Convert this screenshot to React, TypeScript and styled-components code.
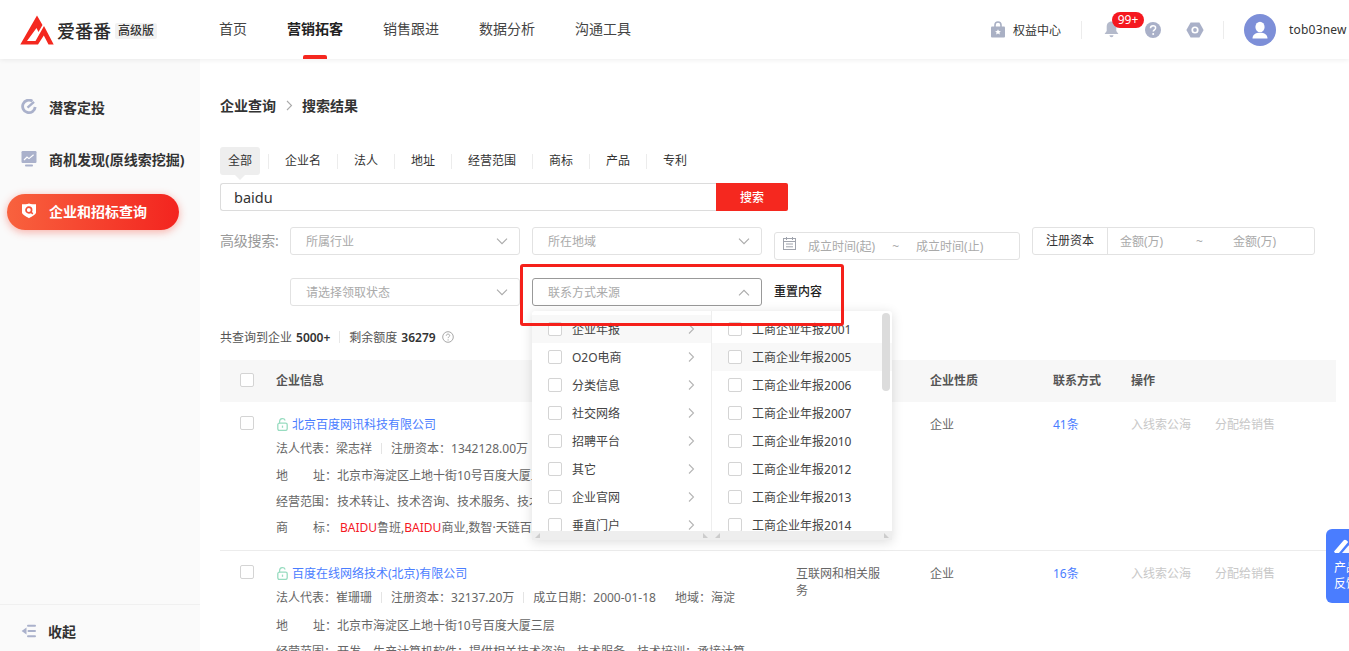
import React from 'react';
import styled, { createGlobalStyle } from 'styled-components';

const FONT = `"Noto Sans", "Noto Sans CJK SC", sans-serif`;

const Global = createGlobalStyle`
  html, body { margin: 0; padding: 0; height: 100%; overflow: hidden; background: #fff; }
  body { font-family: ${FONT}; font-size: 12px; color: #333; }
  * { box-sizing: border-box; }
`;

const Page = styled.div`
  position: relative;
  width: 1349px;
  height: 651px;
  overflow: hidden;
  display: flex;
  flex-direction: column;
`;

const Header = styled.header`
  position: relative;
  z-index: 5;
  flex: none;
  height: 59px;
  background: #fff;
  box-shadow: 0 1px 5px rgba(0, 0, 0, 0.07);
  display: flex;
  align-items: center;
  padding-left: 20px;
`;

const Brand = styled.div`
  width: 199px;
  display: flex;
  align-items: center;
`;

const BrandName = styled.span`
  margin-left: 3px;
  font-size: 18px;
  font-weight: 500;
  color: #2b2b2b;
  line-height: 24px;
  margin-top: 2px;
`;

const BrandTag = styled.span`
  margin-left: 4px;
  margin-top: 2px;
  width: 42px;
  height: 16px;
  line-height: 16px;
  text-align: center;
  background: #f2f2f2;
  border-radius: 2px;
  font-size: 12px;
  font-weight: 500;
  color: #333;
`;

const Nav = styled.nav`
  display: flex;
  gap: 40px;
  height: 59px;
`;

const NavItem = styled.a<{ $active?: boolean }>`
  position: relative;
  font-size: 14px;
  line-height: 57px;
  color: ${(p) => (p.$active ? '#222' : '#444')};
  font-weight: ${(p) => (p.$active ? 700 : 400)};
  &::after {
    content: '';
    display: ${(p) => (p.$active ? 'block' : 'none')};
    position: absolute;
    left: 16px;
    bottom: 0;
    width: 24px;
    height: 4px;
    border-radius: 2px 2px 0 0;
    background: #f5281f;
  }
`;

const HeaderRight = styled.div`
  margin-left: auto;
  display: flex;
  align-items: center;
  height: 59px;
`;

const Perk = styled.div`
  width: 70px;
  display: flex;
  align-items: center;
  gap: 8px;
  font-size: 12px;
  color: #333;
`;

const VDivider = styled.i<{ $l: number; $r: number }>`
  display: block;
  width: 1px;
  height: 18px;
  background: #ececec;
  margin: 0 ${(p) => p.$r}px 0 ${(p) => p.$l}px;
`;

const IconSlot = styled.span<{ $w: number }>`
  position: relative;
  width: ${(p) => p.$w}px;
  display: flex;
  align-items: center;
`;

const Badge = styled.span`
  position: absolute;
  left: 8px;
  top: -9px;
  width: 32px;
  height: 16px;
  line-height: 16px;
  border-radius: 8px;
  background: #f5181f;
  color: #fff;
  font-size: 12px;
  text-align: center;
`;

const Avatar = styled.span`
  width: 32px;
  height: 32px;
  border-radius: 50%;
  background: #7d8fd8;
  display: flex;
  align-items: center;
  justify-content: center;
`;

const UserName = styled.span`
  margin-left: 13px;
  width: 60px;
  white-space: nowrap;
  font-size: 12px;
  letter-spacing: 0.2px;
  color: #333;
`;

const Body = styled.div`
  flex: 1;
  min-height: 0;
  display: flex;
`;

const Sidebar = styled.aside`
  flex: none;
  width: 200px;
  background: #fafafa;
  display: flex;
  flex-direction: column;
  padding: 31px 0 0 7px;
`;

const SideItem = styled.div<{ $active?: boolean }>`
  width: 172px;
  height: 36px;
  margin-bottom: 16px;
  padding: 0 0 2px 14px;
  border-radius: 18px;
  display: flex;
  align-items: center;
  gap: 12px;
  font-size: 14px;
  font-weight: 700;
  white-space: nowrap;
  color: ${(p) => (p.$active ? '#fff' : '#333')};
  background: ${(p) => (p.$active ? 'linear-gradient(90deg, #f8623e, #f3241f)' : 'transparent')};
  box-shadow: ${(p) => (p.$active ? '0 2px 8px rgba(245, 60, 40, 0.4)' : 'none')};
  svg {
    flex: none;
  }
`;

const SideFoot = styled.div`
  margin: auto 0 0 -7px;
  height: 47px;
  border-top: 1px solid #f0f0f0;
  padding: 6px 0 0 21px;
  display: flex;
  align-items: center;
  gap: 11px;
  font-size: 14px;
  font-weight: 700;
  color: #333;
`;

const Main = styled.main`
  flex: 1;
  min-width: 0;
  padding: 37px 13px 0 20px;
`;

const Crumbs = styled.div`
  height: 18px;
  display: flex;
  align-items: center;
  gap: 9.5px;
  font-size: 14px;
  font-weight: 700;
  color: #333;
`;

const Tabs = styled.div`
  margin-top: 33px;
  display: flex;
  gap: 17px;
  height: 28px;
`;

const Tab = styled.span<{ $active?: boolean; $first?: boolean }>`
  position: relative;
  padding: 0 8px;
  line-height: 28px;
  font-size: 12px;
  color: #333;
  border-radius: 3px;
  background: ${(p) => (p.$active ? '#eeeeee' : 'transparent')};
  &::before {
    content: '';
    display: ${(p) => (p.$first ? 'none' : 'block')};
    position: absolute;
    left: -9px;
    top: 7px;
    width: 1px;
    height: 15px;
    background: #ececec;
  }
  &::after {
    content: '';
    display: ${(p) => (p.$active ? 'block' : 'none')};
    position: absolute;
    left: 15px;
    bottom: -5px;
    border-left: 5px solid transparent;
    border-right: 5px solid transparent;
    border-top: 5px solid #eeeeee;
  }
`;

const SearchRow = styled.div`
  margin-top: 8px;
  display: flex;
  height: 28px;
`;

const SearchInput = styled.div`
  width: 496px;
  border: 1px solid #dcdcdc;
  border-right: none;
  border-radius: 3px 0 0 3px;
  padding-left: 13px;
  font-size: 14.5px;
  line-height: 26px;
  color: #333;
`;

const SearchButton = styled.button`
  width: 72px;
  border: none;
  background: #f5281f;
  color: #fff;
  font-family: ${FONT};
  font-size: 12px;
  font-weight: 500;
  border-radius: 0 2px 2px 0;
  padding: 0;
`;

const FilterRow = styled.div<{ $mt: number }>`
  margin-top: ${(p) => p.$mt}px;
  display: flex;
  align-items: flex-start;
  gap: 12px;
`;

const FilterLabel = styled.span`
  width: 58px;
  line-height: 28px;
  font-size: 14px;
  letter-spacing: -0.25px;
  color: #999;
  white-space: nowrap;
`;

const Select = styled.div<{ $open?: boolean }>`
  width: 230px;
  height: 28px;
  border: 1px solid ${(p) => (p.$open ? '#999' : '#e2e2e2')};
  border-radius: 3px;
  padding: 0 11px 0 15px;
  display: flex;
  align-items: center;
  justify-content: space-between;
  font-size: 12px;
  color: #aaa;
  background: #fff;
`;

const DateRange = styled.div`
  margin-top: 5px;
  width: 246px;
  height: 28px;
  border: 1px solid #e2e2e2;
  border-radius: 3px;
  padding-left: 8px;
  display: flex;
  align-items: center;
  font-size: 12px;
  color: #aaa;
`;

const CalendarSlot = styled.span`
  display: flex;
  margin-bottom: 6px;
`;

const DateText = styled.span<{ $ml: number }>`
  margin-left: ${(p) => p.$ml}px;
  white-space: nowrap;
`;

const DateSep = styled.span`
  margin-left: 17px;
`;

const Capital = styled.div`
  width: 283px;
  height: 28px;
  border: 1px solid #e2e2e2;
  border-radius: 3px;
  display: flex;
  align-items: center;
  font-size: 12px;
  color: #aaa;
`;

const CapitalLabel = styled.span`
  width: 75px;
  height: 26px;
  line-height: 26px;
  text-align: center;
  color: #333;
  border-right: 1px solid #e2e2e2;
`;

const CapitalText = styled.span<{ $w: number; $pl: number }>`
  width: ${(p) => p.$w}px;
  padding-left: ${(p) => p.$pl}px;
`;

const RowSpacer = styled.span`
  width: 58px;
`;

const ResetLink = styled.span`
  line-height: 28px;
  font-size: 12px;
  font-weight: 500;
  color: #222;
`;

const Stats = styled.div`
  margin-top: 22px;
  height: 18px;
  display: flex;
  align-items: center;
  font-size: 12px;
  color: #555;
`;

const StatValue = styled.b`
  margin-left: 4px;
  font-weight: 600;
  color: #333;
`;

const StatDivider = styled.i`
  width: 1px;
  height: 12px;
  margin: 0 9px;
  background: #e8e8e8;
`;

const Table = styled.div`
  margin-top: 14px;
  width: 1116px;
`;

const columns = '56px 520px 134px 123px 78px 205px';

const TableHead = styled.div`
  display: grid;
  grid-template-columns: ${columns};
  height: 42px;
  padding-bottom: 2px;
  align-items: center;
  background: #f7f7f7;
  font-size: 12px;
  font-weight: 600;
  color: #555;
`;

const Check = styled.span<{ $ml?: number }>`
  display: block;
  flex: none;
  width: 14px;
  height: 14px;
  margin-left: ${(p) => p.$ml ?? 0}px;
  border: 1px solid #d4d4d4;
  border-radius: 2px;
  background: #fff;
`;

const TableRow = styled.div`
  display: grid;
  grid-template-columns: ${columns};
  height: 149px;
  padding-top: 14px;
  border-bottom: 1px solid #ececec;
  font-size: 12px;
  color: #666;
  line-height: 17px;
`;

const Info = styled.div`
  min-width: 0;
  margin-top: -1px;
  overflow: hidden;
`;

const CompanyName = styled.div`
  display: flex;
  align-items: center;
  gap: 4px;
  height: 18px;
  color: #4a7dff;
`;

const LockMark = styled.span`
  margin-left: 1px;
  display: flex;
`;

const InfoLine = styled.div<{ $mt: number }>`
  display: flex;
  align-items: center;
  height: 18px;
  margin-top: ${(p) => p.$mt}px;
  white-space: nowrap;
`;

const Label = styled.span`
  flex: none;
  width: 61px;
  display: flex;
  justify-content: space-between;
`;

const Sep = styled.i`
  flex: none;
  width: 1px;
  height: 11px;
  background: #e4e4e4;
  margin: 0 9px;
`;

const Value = styled.span<{ $pl?: number }>`
  padding-left: ${(p) => p.$pl ?? 0}px;
`;

const Hit = styled.span`
  color: #f5181f;
`;

const Region = styled.span`
  margin-left: 19px;
`;

const Cell = styled.div`
  padding-right: 40px;
`;

const Count = styled.div`
  color: #4a7dff;
`;

const Actions = styled.div`
  display: flex;
  gap: 24px;
  color: #c8c8c8;
`;

const Dropdown = styled.div`
  position: absolute;
  left: 532px;
  top: 311px;
  z-index: 6;
  width: 360px;
  height: 229px;
  background: #fff;
  box-shadow: 0 2px 12px rgba(0, 0, 0, 0.14);
  display: flex;
  border-radius: 3px;
`;

const DropColumn = styled.div<{ $w: number; $border?: boolean }>`
  position: relative;
  width: ${(p) => p.$w}px;
  border-right: ${(p) => (p.$border ? '1px solid #eeeeee' : 'none')};
  display: flex;
  flex-direction: column;
`;

const DropList = styled.div`
  height: 220px;
  padding-top: 4px;
  overflow: hidden;
`;

const DropRow = styled.div<{ $hover?: boolean }>`
  height: 28px;
  padding: 0 16px;
  display: flex;
  align-items: center;
  gap: 10px;
  font-size: 12px;
  color: #444;
  white-space: nowrap;
  background: ${(p) => (p.$hover ? '#f8f8f8' : 'transparent')};
`;

const Chevron = styled.span`
  margin-left: auto;
  display: flex;
`;

const HBar = styled.div`
  height: 9px;
  background: #eeeeee;
  display: flex;
  justify-content: space-between;
  align-items: center;
  padding: 0 3px;
`;

const Corner = styled.i<{ $flip?: boolean }>`
  width: 0;
  height: 0;
  border-style: solid;
  border-width: 5px 0 0 5px;
  border-color: transparent transparent transparent #cccccc;
  transform: ${(p) => (p.$flip ? 'none' : 'scaleX(-1)')};
`;

const VThumb = styled.div`
  position: absolute;
  left: 170px;
  top: 2px;
  width: 8px;
  height: 78px;
  border-radius: 4px;
  background: #dcdcdc;
`;

const Highlight = styled.div`
  position: absolute;
  left: 520px;
  top: 264px;
  z-index: 7;
  width: 324px;
  height: 62px;
  border: 3px solid #f5201a;
  border-radius: 3px;
  pointer-events: none;
`;

const Feedback = styled.div`
  position: absolute;
  left: 1326px;
  top: 529px;
  z-index: 7;
  width: 44px;
  height: 74px;
  border-radius: 6px 0 0 6px;
  background: #4a7dff;
  color: #fff;
  font-size: 12px;
  line-height: 16px;
  padding: 9px 0 0 8px;
`;

const FeedbackText = styled.div`
  margin-top: 2px;
  width: 26px;
`;

const ArrowDown = ({ up }: { up?: boolean }) => (
  <svg width="12" height="7" viewBox="0 0 12 7" fill="none">
    <path d={up ? 'M1 6.3l5-5 5 5' : 'M1 .7l5 5 5-5'} stroke="#aaa" strokeWidth="1.1" />
  </svg>
);

const ChevronRight = ({ color = '#b5b5b5', h = 10 }: { color?: string; h?: number }) => (
  <svg width="7" height={h} viewBox="0 0 7 10" fill="none">
    <path d="M1 0.5l4.5 4.5L1 9.5" stroke={color} strokeWidth="1.1" />
  </svg>
);

const Logo = () => (
  <svg width="34" height="30" viewBox="0 0 34 30">
    <path
      d="M0.3 29.5 L17 0.5 L22.5 10 L18.5 17 L16.5 13 L7 26 L15.5 26 L24 11 L33.7 29.5 L28.5 29.5 L23.8 20.5 L18 29.5 Z"
      fill="#f4281f"
    />
  </svg>
);

const LockIcon = () => (
  <svg width="14" height="17" viewBox="0 0 14 17">
    <path d="M4 6V4a3 3 0 0 1 6 0v2" fill="none" stroke="#a9b0c4" strokeWidth="1.6" />
    <rect x="0" y="5.5" width="14" height="11" rx="1" fill="#a9b0c4" />
    <path d="M7 8.2l.9 1.8 2 .2-1.5 1.3.5 2-1.9-1-1.9 1 .5-2-1.5-1.3 2-.2z" fill="#fff" />
  </svg>
);

const BellIcon = () => (
  <svg width="15" height="17" viewBox="0 0 15 17">
    <path d="M7.5 0.5c-3.2 0-4.8 2.4-4.8 5.2v4.2L0.6 13h13.8l-2.1-3.1V5.7c0-2.8-1.6-5.2-4.8-5.2z" fill="#b4bacb" />
    <path d="M5.5 14.2h4c0 1.2-.9 2-2 2s-2-.8-2-2z" fill="#b4bacb" />
  </svg>
);

const HelpIcon = () => (
  <svg width="16" height="16" viewBox="0 0 16 16">
    <circle cx="8" cy="8" r="8" fill="#a9b0c8" />
    <path d="M5.5 6.2c0-1.5 1.1-2.4 2.6-2.4s2.5.9 2.5 2.1c0 1.9-2.4 1.9-2.4 3.7" fill="none" stroke="#fff" strokeWidth="1.5" />
    <circle cx="8.2" cy="12" r="1" fill="#fff" />
  </svg>
);

const GearIcon = () => (
  <svg width="18" height="16" viewBox="0 0 18 16">
    <path d="M4.6 0.5h8.8L17.6 8l-4.2 7.5H4.6L0.4 8z" fill="#a9b0c8" />
    <circle cx="9" cy="8" r="3.6" fill="#fff" />
    <circle cx="9" cy="8" r="1.9" fill="#a9b0c8" />
  </svg>
);

const UserIcon = () => (
  <svg width="18" height="18" viewBox="0 0 18 18">
    <ellipse cx="9" cy="6" rx="4.6" ry="5.2" fill="#fff" />
    <path d="M1.5 17.5c0-3.8 3-5.8 7.5-5.8s7.5 2 7.5 5.8z" fill="#fff" />
  </svg>
);

const TargetIcon = () => (
  <svg width="16" height="16" viewBox="0 0 16 16" fill="none">
    <path d="M11.4 2.1A6.3 6.3 0 1 0 14.2 8" stroke="#aab1cb" strokeWidth="2.8" />
    <path d="M6.5 8.6L13 2.8" stroke="#aab1cb" strokeWidth="2.4" />
  </svg>
);

const MonitorIcon = () => (
  <svg width="16" height="16" viewBox="0 0 16 16">
    <rect x="0.5" y="0" width="15" height="12" rx="1.2" fill="#aab1cb" />
    <path d="M3 9l3-3 2 1.6L12.6 3.8" fill="none" stroke="#fff" strokeWidth="1.2" />
    <rect x="4" y="13.6" width="8" height="1.8" rx="0.9" fill="#aab1cb" />
  </svg>
);

const ShieldIcon = () => (
  <svg width="16" height="16" viewBox="0 0 16 16">
    <path d="M1 1.2C3 1.2 6 1 8 .4c2 .6 5 .8 7 .8v8.6c0 1.4-4.4 4-7 5.4-2.6-1.4-7-4-7-5.4z" fill="#fff" />
    <circle cx="7.8" cy="7" r="2.8" fill="none" stroke="#f5513a" strokeWidth="1.7" />
    <path d="M9.8 9l2 1.8" stroke="#f5513a" strokeWidth="1.6" />
  </svg>
);

const CollapseIcon = () => (
  <svg width="16" height="14" viewBox="0 0 16 14">
    <path d="M5.5 3.6v6.8L0.6 7z" fill="#aab1cb" />
    <rect x="6" y="0.8" width="9" height="2" rx="1" fill="#aab1cb" />
    <rect x="6.5" y="6" width="8.5" height="2" rx="1" fill="#aab1cb" />
    <rect x="6" y="11.2" width="9" height="2" rx="1" fill="#aab1cb" />
  </svg>
);

const CalendarIcon = () => (
  <svg width="13" height="13" viewBox="0 0 13 13" fill="none" stroke="#a0a4ad">
    <rect x="0.5" y="1.5" width="12" height="11" />
    <path d="M0.5 4.5h12M3.5 0v3M9.5 0v3M3 7h7M3 9.8h7" />
  </svg>
);

const QuestionIcon = () => (
  <svg width="12" height="12" viewBox="0 0 12 12" fill="none" style={{ marginLeft: 6 }}>
    <circle cx="6" cy="6" r="5.3" stroke="#a8a8a8" />
    <path d="M4.3 4.7c0-1 .8-1.6 1.7-1.6s1.7.6 1.7 1.5c0 1.2-1.6 1.2-1.6 2.5" stroke="#a8a8a8" />
    <circle cx="6.1" cy="8.9" r="0.6" fill="#a8a8a8" />
  </svg>
);

const GreenLock = () => (
  <svg width="11" height="13" viewBox="0 0 11 13" fill="none">
    <path d="M2.6 5.5V3.4a2.9 2.9 0 0 1 5.6-.9" stroke="#98dcc0" strokeWidth="1.2" />
    <rect x="0.8" y="5.2" width="9.4" height="7.2" rx="1.6" stroke="#98dcc0" strokeWidth="1.3" />
    <path d="M5.5 7.6v2.2" stroke="#98dcc0" strokeWidth="1.3" />
  </svg>
);

const Pencil = () => (
  <svg width="24" height="16" viewBox="0 0 24 16">
    <path d="M0 13.5L9.5 2.5c.8-1 2-1 2.9-.2l1.8 1.6L5 15H1z" fill="#fff" />
    <path d="M8 15l6.5-7.5 7 .5V15z" fill="#fff" opacity="0.95" />
  </svg>
);

const leftItems = ['企业年报', 'O2O电商', '分类信息', '社交网络', '招聘平台', '其它', '企业官网', '垂直门户'];
const rightItems = ['2001', '2005', '2006', '2007', '2010', '2012', '2013', '2014'];
const tabs = ['全部', '企业名', '法人', '地址', '经营范围', '商标', '产品', '专利'];
const navs = ['首页', '营销拓客', '销售跟进', '数据分析', '沟通工具'];

export default function App() {
  return (
    <Page>
      <Global />
      <Header>
        <Brand>
          <Logo />
          <BrandName>爱番番</BrandName>
          <BrandTag>高级版</BrandTag>
        </Brand>
        <Nav>
          {navs.map((n, i) => (
            <NavItem key={n} $active={i === 1}>
              {n}
            </NavItem>
          ))}
        </Nav>
        <HeaderRight>
          <Perk>
            <LockIcon />
            权益中心
          </Perk>
          <VDivider $l={20} $r={22} />
          <IconSlot $w={41}>
            <BellIcon />
            <Badge>99+</Badge>
          </IconSlot>
          <IconSlot $w={41}>
            <HelpIcon />
          </IconSlot>
          <IconSlot $w={37}>
            <GearIcon />
          </IconSlot>
          <VDivider $l={0} $r={20} />
          <Avatar>
            <UserIcon />
          </Avatar>
          <UserName>tob03new</UserName>
        </HeaderRight>
      </Header>
      <Body>
        <Sidebar>
          <SideItem>
            <TargetIcon />
            潜客定投
          </SideItem>
          <SideItem>
            <MonitorIcon />
            商机发现(原线索挖掘)
          </SideItem>
          <SideItem $active>
            <ShieldIcon />
            企业和招标查询
          </SideItem>
          <SideFoot>
            <CollapseIcon />
            收起
          </SideFoot>
        </Sidebar>
        <Main>
          <Crumbs>
            企业查询
            <ChevronRight color="#aaa" h={11} />
            搜索结果
          </Crumbs>
          <Tabs>
            {tabs.map((t, i) => (
              <Tab key={t} $active={i === 0} $first={i === 0}>
                {t}
              </Tab>
            ))}
          </Tabs>
          <SearchRow>
            <SearchInput>baidu</SearchInput>
            <SearchButton>搜索</SearchButton>
          </SearchRow>
          <FilterRow $mt={16}>
            <FilterLabel>高级搜索:</FilterLabel>
            <Select>
              所属行业
              <ArrowDown />
            </Select>
            <Select>
              所在地域
              <ArrowDown />
            </Select>
            <DateRange>
              <CalendarSlot>
                <CalendarIcon />
              </CalendarSlot>
              <DateText $ml={12}>成立时间(起)</DateText>
              <DateSep>~</DateSep>
              <DateText $ml={17}>成立时间(止)</DateText>
            </DateRange>
            <Capital>
              <CapitalLabel>注册资本</CapitalLabel>
              <CapitalText $w={88} $pl={12}>金额(万)</CapitalText>
              <CapitalText $w={37} $pl={0}>~</CapitalText>
              <CapitalText $w={80} $pl={0}>金额(万)</CapitalText>
            </Capital>
          </FilterRow>
          <FilterRow $mt={18}>
            <RowSpacer />
            <Select>
              请选择领取状态
              <ArrowDown />
            </Select>
            <Select $open>
              联系方式来源
              <ArrowDown up />
            </Select>
            <ResetLink>重置内容</ResetLink>
          </FilterRow>
          <Stats>
            共查询到企业<StatValue>5000+</StatValue>
            <StatDivider />
            剩余额度<StatValue>36279</StatValue>
            <QuestionIcon />
          </Stats>
          <Table>
            <TableHead>
              <Check $ml={20} />
              <span>企业信息</span>
              <span />
              <span>企业性质</span>
              <span>联系方式</span>
              <span>操作</span>
            </TableHead>
            <TableRow>
              <Check $ml={20} />
              <Info>
                <CompanyName>
                  <LockMark>
                    <GreenLock />
                  </LockMark>
                  北京百度网讯科技有限公司
                </CompanyName>
                <InfoLine $mt={6}>
                  法人代表：梁志祥
                  <Sep />
                  注册资本：1342128.00万
                </InfoLine>
                <InfoLine $mt={9}>
                  <Label>
                    <span>地</span>
                    <span>址：</span>
                  </Label>
                  <Value>北京市海淀区上地十街10号百度大厦三层</Value>
                </InfoLine>
                <InfoLine $mt={8}>
                  <Label>
                    <span>经营范围：</span>
                  </Label>
                  <Value>技术转让、技术咨询、技术服务、技术培训</Value>
                </InfoLine>
                <InfoLine $mt={8}>
                  <Label>
                    <span>商</span>
                    <span>标：</span>
                  </Label>
                  <Value $pl={3}>
                    <Hit>BAIDU</Hit>鲁班,<Hit>BAIDU</Hit>商业,数智·天链百度
                  </Value>
                </InfoLine>
              </Info>
              <Cell />
              <div>企业</div>
              <Count>41条</Count>
              <Actions>
                <span>入线索公海</span>
                <span>分配给销售</span>
              </Actions>
            </TableRow>
            <TableRow>
              <Check $ml={20} />
              <Info>
                <CompanyName>
                  <LockMark>
                    <GreenLock />
                  </LockMark>
                  百度在线网络技术(北京)有限公司
                </CompanyName>
                <InfoLine $mt={6}>
                  法人代表：崔珊珊
                  <Sep />
                  注册资本：32137.20万
                  <Sep />
                  成立日期：2000-01-18
                  <Region>地域：海淀</Region>
                </InfoLine>
                <InfoLine $mt={10}>
                  <Label>
                    <span>地</span>
                    <span>址：</span>
                  </Label>
                  <Value>北京市海淀区上地十街10号百度大厦三层</Value>
                </InfoLine>
                <InfoLine $mt={8}>
                  <Label>
                    <span>经营范围：</span>
                  </Label>
                  <Value>开发、生产计算机软件；提供相关技术咨询、技术服务、技术培训；承接计算</Value>
                </InfoLine>
              </Info>
              <Cell>互联网和相关服务</Cell>
              <div>企业</div>
              <Count>16条</Count>
              <Actions>
                <span>入线索公海</span>
                <span>分配给销售</span>
              </Actions>
            </TableRow>
          </Table>
        </Main>
      </Body>
      <Dropdown>
        <DropColumn $w={180} $border>
          <DropList>
            {leftItems.map((t, i) => (
              <DropRow key={t} $hover={i === 0}>
                <Check />
                {t}
                <Chevron>
                  <ChevronRight />
                </Chevron>
              </DropRow>
            ))}
          </DropList>
          <HBar>
            <Corner />
            <Corner $flip />
          </HBar>
        </DropColumn>
        <DropColumn $w={180}>
          <DropList>
            {rightItems.map((y, i) => (
              <DropRow key={y} $hover={i === 1}>
                <Check />
                工商企业年报{y}
              </DropRow>
            ))}
          </DropList>
          <HBar>
            <Corner />
            <Corner $flip />
          </HBar>
          <VThumb />
        </DropColumn>
      </Dropdown>
      <Highlight />
      <Feedback>
        <Pencil />
        <FeedbackText>产品反馈</FeedbackText>
      </Feedback>
    </Page>
  );
}
